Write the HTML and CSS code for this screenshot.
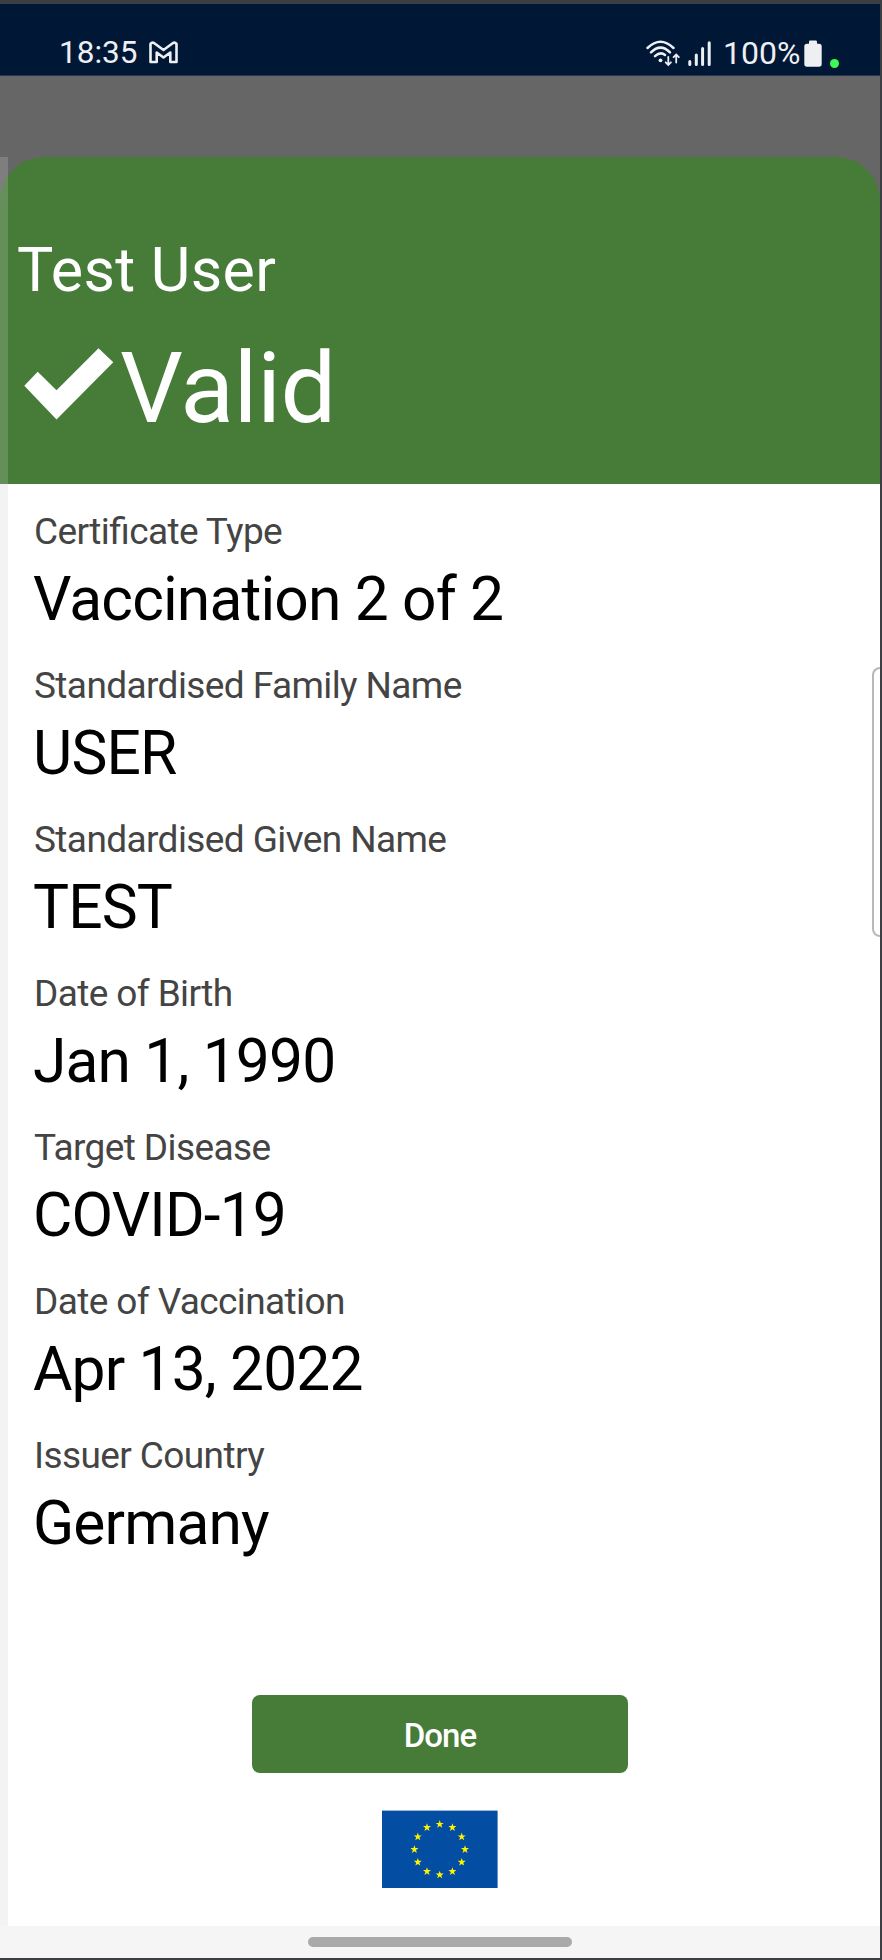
FILE: index.html
```
<!DOCTYPE html>
<html lang="en">
<head>
<meta charset="utf-8">
<title>Certificate</title>
<link rel="stylesheet" href="styles.css">
</head>
<body>
<div class="screen">
  <div class="statusbar">
    <span class="clock">18:35</span>
    <svg class="mail" width="29" height="23" viewBox="0 0 29 23"><path d="M1.500 21V2.800Q3 1 5 2L14.500 9L24 2Q26 1 27.500 2.800V21H21.300V11.500L14.500 16.500L7.700 11.500V21Z" fill="none" stroke="#edeff3" stroke-width="2.600" stroke-linejoin="round"/></svg>
    <svg class="wifi" width="34" height="27" viewBox="0 0 34 27"><g fill="none" stroke="#edeff3" stroke-width="2.500" stroke-linecap="round"><path d="M1.500 8Q14.500-4.500 27.500 8"/><path d="M5 12.300Q14.500 2.800 24 12.300"/><path d="M9 16.200Q14.500 11.200 19 15"/><path d="M22.300 17V24.500M19.700 22.300L22.300 25L24.900 22.300M30.200 22.500V15M27.600 17.200L30.200 14.500L32.800 17.200" stroke-width="1.800"/></g><circle cx="14.500" cy="20.300" r="1.900" fill="#edeff3"/></svg>
    <svg class="signal" width="24" height="25" viewBox="0 0 24 25"><path d="M1.800 20.500V23.500M8.300 14V23.500M14.600 7.500V23.500M21.200 1.800V23.500" stroke="#edeff3" stroke-width="3" stroke-linecap="round"/></svg>
    <span class="percent">100%</span>
    <svg class="battery" width="18" height="27" viewBox="0 0 18 27"><rect x="5" y="0.500" width="8" height="6" rx="1.200" fill="#edeff3"/><rect x="0.300" y="3.800" width="17.400" height="22.900" rx="2.700" fill="#edeff3"/></svg>
    <span class="dot"></span>
  </div>
  <main class="backdrop">
    <section class="card">
      <header class="result">
        <h1 class="person">Test User</h1>
        <div class="status">
          <svg class="check" width="90" height="72" viewBox="0 0 90 72"><path d="M0.300 37.700L13.700 23.700L32.500 42.300L74.500 0.300L89.300 14.300L32.500 71.500Z" fill="#fff"/></svg>
          <span class="verdict">Valid</span>
        </div>
      </header>
      <div class="body">
        <dl class="details">
          <dt>Certificate Type</dt><dd>Vaccination 2 of 2</dd>
          <dt>Standardised Family Name</dt><dd>USER</dd>
          <dt>Standardised Given Name</dt><dd>TEST</dd>
          <dt>Date of Birth</dt><dd>Jan 1, 1990</dd>
          <dt>Target Disease</dt><dd>COVID-19</dd>
          <dt>Date of Vaccination</dt><dd>Apr 13, 2022</dd>
          <dt>Issuer Country</dt><dd>Germany</dd>
        </dl>
        <footer class="actions">
          <button class="done">Done</button>
          <svg class="flag" width="116" height="78" viewBox="0 0 116 78">
            <defs><path id="star" d="M0-4.100L1-1.300H4L1.600.6L2.500 3.500L0 1.800L-2.500 3.500L-1.600.6L-4-1.300H-1Z"/></defs>
            <rect y="0.600" width="115.600" height="77.400" fill="#034ea2"/>
            <g fill="#fff200">
              <use href="#star" x="57.700" y="14.200"/><use href="#star" x="70.400" y="17.400"/><use href="#star" x="79.700" y="26.700"/><use href="#star" x="83" y="39.400"/><use href="#star" x="79.700" y="52.100"/><use href="#star" x="70.400" y="61.400"/><use href="#star" x="57.700" y="64.800"/><use href="#star" x="45" y="61.400"/><use href="#star" x="35.800" y="52.100"/><use href="#star" x="32.400" y="39.400"/><use href="#star" x="35.800" y="26.700"/><use href="#star" x="45" y="17.400"/>
            </g>
          </svg>
        </footer>
      </div>
    </section>
    <div class="edge-strip"></div>
    <div class="edge-handle"></div>
  </main>
  <nav class="navbar"><span class="pill"></span></nav>
</div>
</body>
</html>
```
FILE: styles.css
```
* { box-sizing: border-box; }
body { margin: 0; font-family: Roboto, sans-serif; background: #3b3f44; }
.screen {
  width: 882px;
  height: 1960px;
  border: solid #3b3f44;
  border-width: 4px 2px 2px 0;
  display: flex;
  flex-direction: column;
  overflow: hidden;
}
.statusbar {
  flex: none;
  height: 72px;
  background: #001735;
  border-bottom: 1px solid #2b3550;
  color: #edeff3;
  display: flex;
  align-items: flex-start;
  padding: 0 39px 0 59px;
  font-size: 31.500px;
  line-height: 36px;
}
.clock { margin-top: 31px; width: 90px; white-space: nowrap; }
.mail { margin-top: 37px; }
.wifi { margin: 36px 0 0 468px; flex: none; }
.signal { margin: 37px 0 0 8px; flex: none; }
.percent { margin: 31px 0 0 11px; width: 80px; white-space: nowrap; font-size: 32px; }
.battery { margin: 36px 0 0 1px; flex: none; }
.dot { flex: none; width: 9px; height: 9px; border-radius: 50%; background: #3dfa57; margin: 55px 0 0 8px; }
.backdrop { position: relative; flex: none; height: 1850px; background: #666; padding-top: 81px; }
.card { height: 1769px; display: flex; flex-direction: column; }
.result { flex: none; height: 326.500px; background: #467b38; border-radius: 44px 44px 0 0; color: #fff; padding: 78px 0 0 17px; }
.person { margin: 0; font-weight: 400; font-size: 61px; line-height: 70px; letter-spacing: 0.300px; white-space: nowrap; }
.status { display: flex; padding: 43px 0 0 7px; }
.check { flex: none; }
.verdict { font-size: 99px; line-height: 116px; letter-spacing: -0.600px; margin: -18px 0 0 6px; }
.body { flex: 1; background: #fff; }
.details { margin: 0; padding: 19.500px 0 0 34px; white-space: nowrap; }
.details dt { font-size: 37px; line-height: 58px; color: #444; letter-spacing: -0.600px; font-feature-settings: "liga" 1; }
.details dd { margin: 0 0 18px -1px; font-size: 60.500px; line-height: 78px; color: #000; letter-spacing: -0.850px; }
.actions { display: flex; flex-direction: column; align-items: center; padding-top: 114px; }
.done {
  width: 376px;
  height: 78px;
  border: 0;
  border-radius: 8px;
  background: #467b38;
  color: #fff;
  font: 500 33px/82px Roboto, sans-serif;
  letter-spacing: -0.900px;
  padding: 0;
}
.flag { margin-top: 37px; }
.edge-strip { position: absolute; left: 0; top: 81px; bottom: 0; width: 8px; background: rgba(226, 226, 226, .2); }
.edge-strip::after { content: ""; position: absolute; left: 0; right: 0; top: 326.500px; bottom: 0; background: #f3f3f3; }
.edge-handle { position: absolute; right: 0; top: 591px; width: 8px; height: 270px; border: 2px solid #b8b8b8; border-right: 0; border-radius: 8px 0 0 8px; }
.navbar { flex: 1; background: #f5f5f5; display: flex; justify-content: center; padding-top: 11px; }
.pill { width: 264px; height: 10px; border-radius: 5px; background: #a9a9a9; }
```
